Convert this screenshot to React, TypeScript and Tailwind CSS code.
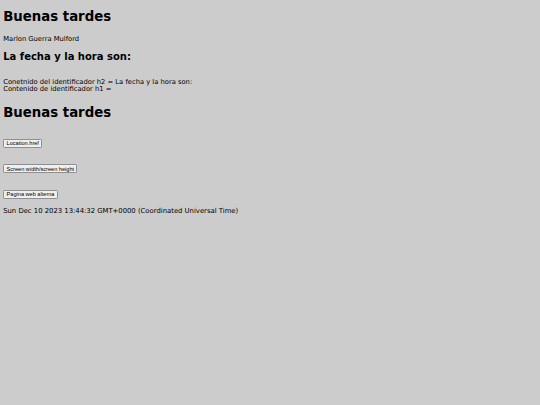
import React from 'react';

const buttonClass =
  "rounded-[1.2px] border-[0.8px] border-[#8f8f8f] bg-[#efefef] px-[2.4px] pt-[0.6px] text-[5.6px] leading-[6.5px] font-['Liberation_Sans',Arial,sans-serif]";

const App: React.FC = () => {
  return (
    <div className="min-h-[405px] bg-[#cccccc] px-[3.2px] pt-[9.6px] text-black antialiased font-['DejaVu_Sans',sans-serif]">
      {/* Saludo */}
      <h1 className="text-[13.3px] font-bold leading-[14.9px]">Buenas tardes</h1>
      <p className="mt-[11.4px] text-[6.75px] leading-[7.45px]">Marlon Guerra Mulford</p>

      <h2 className="mt-[7.9px] text-[10px] font-bold leading-[11.2px]">La fecha y la hora son:</h2>

      <div className="mt-[16.5px] text-[6.75px] leading-[7.45px]">
        <p>Conetnido del identificador h2 = La fecha y la hora son:</p>
        <p>Contenido de identificador h1 =</p>
      </div>

      <h1 className="mt-[12.4px] text-[13.3px] font-bold leading-[14.9px]">Buenas tardes</h1>

      {/* Botones */}
      <div className="mt-[17.7px] flex flex-col items-start gap-[16.3px]">
        <button className={buttonClass}>Location.href</button>
        <button className={buttonClass}>Screen width/screen height</button>
        <button className={buttonClass}>Pagina web alterna</button>
      </div>

      <p className="mt-[9.7px] text-[6.85px] leading-[7.45px]">
        Sun Dec 10 2023 13:44:32 GMT+0000 (Coordinated Universal Time)
      </p>
    </div>
  );
};

export default App;
